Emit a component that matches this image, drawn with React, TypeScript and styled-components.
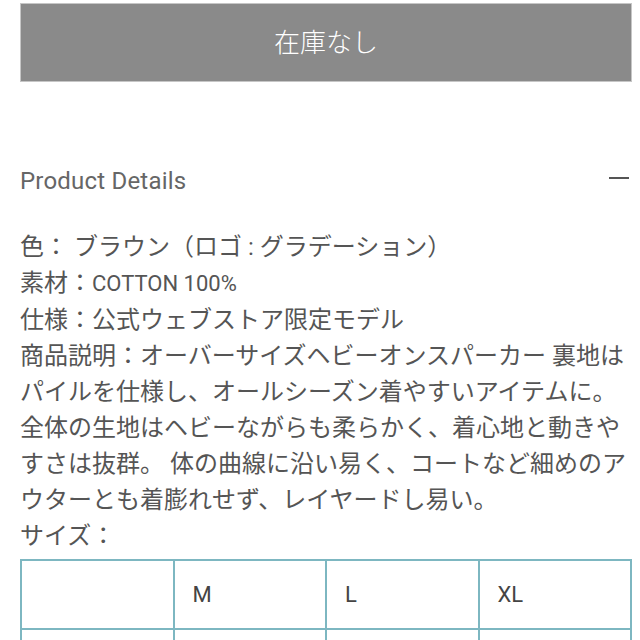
import React from "react";
import styled, { createGlobalStyle } from "styled-components";

const Global = createGlobalStyle`
  html, body { margin: 0; padding: 0; background: #fff; }
  body { font-family: "Roboto", "Noto Sans CJK JP", sans-serif; }
`;

const Page = styled.div`
  padding: 3px 8px 0 20px;
  display: flex;
  flex-direction: column;
`;

const SoldOut = styled.button`
  height: 79px;
  width: 100%;
  box-sizing: border-box;
  background: #8a8a8a;
  border: 1px solid #c6c6c6;
  color: #fff;
  font-family: "Noto Sans CJK JP", sans-serif;
  font-size: 26px;
  font-weight: 300;
  padding: 0 0 4px 0;
  display: flex;
  align-items: center;
  justify-content: center;
  cursor: default;
`;

const Header = styled.div`
  margin-top: 81px;
  display: flex;
  align-items: center;
  justify-content: space-between;
  height: 36px;
`;

const Title = styled.span`
  font-family: "Roboto", sans-serif;
  font-size: 24px;
  color: #666;
  letter-spacing: 0.2px;
`;

const Minus = styled.span`
  width: 20px;
  height: 2px;
  background: #555;
  margin-right: 3px;
  margin-top: -6px;
`;

const Body = styled.div`
  margin-top: 30px;
  color: #555;
  font-size: 24px;
  line-height: 36px;
`;

const Line = styled.div`
  white-space: nowrap;
`;

const Latin = styled.span`
  font-family: "Roboto", sans-serif;
  font-size: 22px;
`;

const Table = styled.table`
  margin-top: 5px;
  width: 100%;
  border-collapse: collapse;
  table-layout: fixed;
`;

const Cell = styled.td`
  border: 2px solid #7db7c1;
  height: 67px;
  padding: 0 0 0 18px;
  font-family: "Roboto", sans-serif;
  font-size: 22px;
  color: #444;
`;

export default function App() {
  return (
    <>
      <Global />
      <Page>
        <SoldOut>在庫なし</SoldOut>
        <Header>
          <Title>Product Details</Title>
          <Minus />
        </Header>
        <Body>
          <Line>色： ブラウン（ロゴ : グラデーション）</Line>
          <Line>素材：<Latin>COTTON 100%</Latin></Line>
          <Line>仕様：公式ウェブストア限定モデル</Line>
          <Line>商品説明：オーバーサイズヘビーオンスパーカー 裏地は</Line>
          <Line>パイルを仕様し、オールシーズン着やすいアイテムに。</Line>
          <Line>全体の生地はヘビーながらも柔らかく、着心地と動きや</Line>
          <Line>すさは抜群。 体の曲線に沿い易く、コートなど細めのア</Line>
          <Line>ウターとも着膨れせず、レイヤードし易い。</Line>
          <Line>サイズ：</Line>
        </Body>
        <Table>
          <tbody>
            <tr>
              <Cell></Cell>
              <Cell>M</Cell>
              <Cell>L</Cell>
              <Cell>XL</Cell>
            </tr>
            <tr>
              <Cell></Cell>
              <Cell></Cell>
              <Cell></Cell>
              <Cell></Cell>
            </tr>
          </tbody>
        </Table>
      </Page>
    </>
  );
}
